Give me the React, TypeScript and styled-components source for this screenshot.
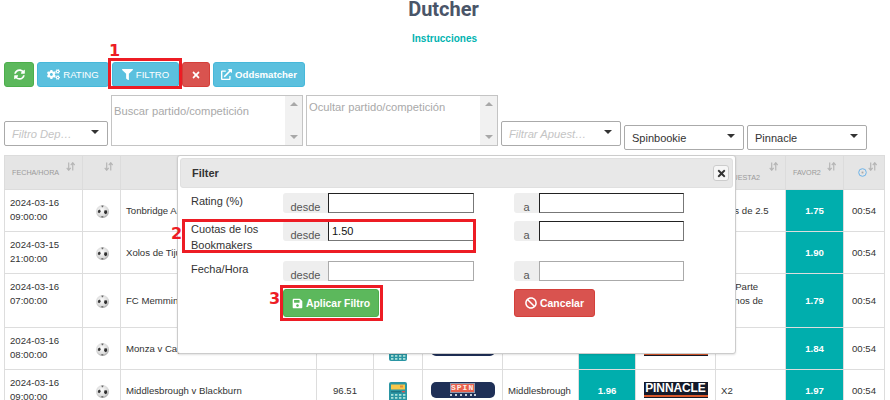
import styled, { createGlobalStyle } from "styled-components";
import {
  FaBan,
  FaCogs,
  FaExternalLinkAlt,
  FaFilter,
  FaSave,
  FaSyncAlt,
  FaTimes,
} from "react-icons/fa";

const rows = [
  { date: "2024-03-16", time: "09:00:00", event: "Tonbridge Angels v Chatham Town", rating: "98.20", home: "Tonbridge", odd: "1.73", bet: "Más de 2.5", lay: "1.75", tall: false },
  { date: "2024-03-15", time: "21:00:00", event: "Xolos de Tijuana v Puebla", rating: "97.85", home: "Xolos", odd: "1.88", bet: "", lay: "1.90", tall: false },
  { date: "2024-03-16", time: "07:00:00", event: "FC Memmingen v Augsburg II", rating: "97.10", home: "Memmingen", odd: "1.77", bet: "1.ª Parte\nMenos de\n1.5", lay: "1.79", tall: true },
  { date: "2024-03-16", time: "08:00:00", event: "Monza v Cagliari", rating: "96.80", home: "Monza", odd: "1.82", bet: "", lay: "1.84", tall: false },
  { date: "2024-03-16", time: "09:00:00", event: "Middlesbrough v Blackburn", rating: "96.51", home: "Middlesbrough", odd: "1.96", bet: "X2", lay: "1.97", tall: false },
];

const columns = [78, 38, 196, 57, 49, 80, 76, 57, 80, 70, 58, 41];

const SortIcon = () => (
  <SortMark viewBox="0 0 10 10" aria-hidden="true">
    <path d="M3 0.5V9M0.8 6.6L3 9.2L5.2 6.6M7.5 9.5V1M5.3 3.4L7.5 0.8L9.7 3.4" fill="none" stroke="#b5b5b5" strokeWidth="1.3" />
  </SortMark>
);

const Ball = () => (
  <BallSvg viewBox="0 0 13 13" aria-hidden="true">
    <defs>
      <radialGradient id="ballShade" cx="0.45" cy="0.4" r="0.65">
        <stop offset="0" stopColor="#ffffff" />
        <stop offset="0.7" stopColor="#d8d8d8" />
        <stop offset="1" stopColor="#8c8c8c" />
      </radialGradient>
    </defs>
    <circle cx="6.5" cy="6.5" r="6.5" fill="url(#ballShade)" />
    <path d="M2 5.5L4 4.6L4.8 6.8L3.2 8.2L1.8 7.2Z" fill="#3a3a3a" />
    <path d="M8.6 5.2L11 5.6L11.2 8.2L9.2 9.2L8 7.4Z" fill="#2f2f2f" />
    <path d="M5.4 0.6L7.6 0.6L7 2.2L5.8 2.2Z" fill="#6b6b6b" />
    <path d="M5.2 11L7.4 11L7.2 12.6L5.6 12.6Z" fill="#777" />
  </BallSvg>
);

const Calculator = () => (
  <CalcSvg viewBox="0 0 18 21" aria-hidden="true">
    <rect width="18" height="21" rx="2" fill="#2a95a3" />
    <rect x="2" y="2.5" width="14" height="5" fill="#f8c84a" />
    <rect x="11" y="3.5" width="3" height="2" fill="#e2893a" />
    <rect x="2" y="9" width="10" height="1.4" fill="#1e7482" />
    <rect x="13" y="9" width="3" height="1.4" fill="#d9534f" />
    {[12, 15, 18].map((y) =>
      [2, 6, 10, 14].map((x) => (
        <rect key={`${x}-${y}`} x={x} y={y} width="2.4" height="1.8" fill="#a8e0d8" />
      ))
    )}
  </CalcSvg>
);

const SpinLogo = () => (
  <SpinPill>
    <SpinWord>SPIN</SpinWord>
    <SpinDots viewBox="0 0 26 2" aria-hidden="true">
      {[1, 6, 11, 16, 21, 25].map((x) => (
        <rect key={x} x={x - 1} y="0" width="2" height="2" fill="#c8cdd8" />
      ))}
    </SpinDots>
  </SpinPill>
);

const App = () => {
  return (
    <>
      <GlobalStyle />
      <Page>
        <Title>Dutcher</Title>
        <HelpLink>Instrucciones</HelpLink>

        <Toolbar>
          <ToolButton $bg="#5cb85c" $border="#4cae4c" $width={30}>
            <FaSyncAlt size={11} />
          </ToolButton>
          <ToolButton $bg="#5bc0de" $border="#46b8da" $width={72}>
            <FaCogs size={13} /> RATING
          </ToolButton>
          <ToolButton $bg="#5bc0de" $border="#46b8da" $width={67}>
            <FaFilter size={11} /> FILTRO
          </ToolButton>
          <ToolButton $bg="#d9534f" $border="#d43f3a" $width={28}>
            <FaTimes size={10} />
          </ToolButton>
          <ToolButton $bg="#5bc0de" $border="#46b8da" $width={92} $bold>
            <FaExternalLinkAlt size={11} /> Oddsmatcher
          </ToolButton>
        </Toolbar>

        <FilterRow>
          <SelectBox $width={104} $lift={4}>
            <Placeholder>Filtro Dep…</Placeholder>
            <Caret />
          </SelectBox>
          <TextBox $width={192}>
            <TextHint $top={13}>Buscar partido/competición</TextHint>
            <ScrollTrack>
              <Arrow $up />
              <Arrow />
            </ScrollTrack>
          </TextBox>
          <TextBox $width={192}>
            <TextHint $top={9}>Ocultar partido/competición</TextHint>
            <ScrollTrack>
              <Arrow $up />
              <Arrow />
            </ScrollTrack>
          </TextBox>
          <SelectBox $width={120} $lift={4}>
            <Placeholder>Filtrar Apuest…</Placeholder>
            <Caret />
          </SelectBox>
          <SelectBox $width={120}>
            <SelectValue>Spinbookie</SelectValue>
            <Caret />
          </SelectBox>
          <SelectBox $width={120}>
            <SelectValue>Pinnacle</SelectValue>
            <Caret />
          </SelectBox>
        </FilterRow>

        <Table>
          <colgroup>
            {columns.map((width, i) => (
              <col key={i} width={width} />
            ))}
          </colgroup>
          <thead>
            <tr>
              <HeadCell>FECHA/HORA<SortIcon /></HeadCell>
              <HeadCell><SortIcon /></HeadCell>
              <HeadCell $center>EVENTO<SortIcon /></HeadCell>
              <HeadCell>RATING<SortIcon /></HeadCell>
              <HeadCell><SortIcon /></HeadCell>
              <HeadCell>CASA1<SortIcon /></HeadCell>
              <HeadCell>APUESTA1<SortIcon /></HeadCell>
              <HeadCell>FAVOR1<SortIcon /></HeadCell>
              <HeadCell>CASA2<SortIcon /></HeadCell>
              <HeadCell>2ª<br />APUESTA2<SortIcon /></HeadCell>
              <HeadCell>FAVOR2<SortIcon /></HeadCell>
              <HeadCell>
                <ClockIcon viewBox="0 0 9 9" aria-hidden="true">
                  <circle cx="4.5" cy="4.5" r="3.8" fill="none" stroke="#6db3e8" strokeWidth="1" />
                  <rect x="3.6" y="3.6" width="1.8" height="1.8" fill="#a9a9a9" />
                </ClockIcon>
                <SortIcon />
              </HeadCell>
            </tr>
          </thead>
          <tbody>
            {rows.map((row, i) => (
              <BodyRow key={i} $tall={row.tall}>
                <DateCell>
                  {row.date}
                  <br />
                  {row.time}
                </DateCell>
                <CenterCell><Ball /></CenterCell>
                <Cell>{row.event}</Cell>
                <CenterCell>{row.rating}</CenterCell>
                <CenterCell><Calculator /></CenterCell>
                <CenterCell><SpinLogo /></CenterCell>
                <Cell>{row.home}</Cell>
                <OddCell>{row.odd}</OddCell>
                <CenterCell>
                  <PinnacleLogo>PINNACLE</PinnacleLogo>
                </CenterCell>
                <BetCell>{row.bet}</BetCell>
                <OddCell>{row.lay}</OddCell>
                <CenterCell>00:54</CenterCell>
              </BodyRow>
            ))}
          </tbody>
        </Table>

        <Modal>
          <ModalHeader>
            <ModalTitle>Filter</ModalTitle>
            <CloseButton>
              <FaTimes size={11} />
            </CloseButton>
          </ModalHeader>
          <ModalBody>
            <FormRow>
              <FormLabel>Rating (%)</FormLabel>
              <InputGroup $width={191}>
                <Addon $width={45}>desde</Addon>
                <RangeInput $strong readOnly value="" />
              </InputGroup>
              <InputGroup $width={170}>
                <Addon $width={25}>a</Addon>
                <RangeInput $strong readOnly value="" />
              </InputGroup>
            </FormRow>
            <FormRow>
              <FormLabel>Cuotas de los Bookmakers</FormLabel>
              <InputGroup $width={191}>
                <Addon $width={45}>desde</Addon>
                <RangeInput $strong readOnly value="1.50" />
              </InputGroup>
              <InputGroup $width={170}>
                <Addon $width={25}>a</Addon>
                <RangeInput $strong readOnly value="" />
              </InputGroup>
            </FormRow>
            <FormRow>
              <FormLabel>Fecha/Hora</FormLabel>
              <InputGroup $width={191}>
                <Addon $width={45}>desde</Addon>
                <RangeInput readOnly value="" />
              </InputGroup>
              <InputGroup $width={170}>
                <Addon $width={25}>a</Addon>
                <RangeInput readOnly value="" />
              </InputGroup>
            </FormRow>
            <FormRow>
              <span />
              <ActionButton $bg="#5cb85c" $border="#4cae4c" $width={96}>
                <FaSave size={11} /> Aplicar Filtro
              </ActionButton>
              <ActionButton $bg="#d9534f" $border="#d43f3a" $width={81}>
                <FaBan size={12} /> Cancelar
              </ActionButton>
            </FormRow>
          </ModalBody>
        </Modal>

        <Marker $left={108} $top={58} $width={74} $height={31} />
        <Marker $left={182} $top={219} $width={294} $height={34} />
        <Marker $left={280} $top={285} $width={103} $height={36} />
        <StepNumber $left={109} $top={41}>1</StepNumber>
        <StepNumber $left={171} $top={224}>2</StepNumber>
        <StepNumber $left={269} $top={289}>3</StepNumber>
      </Page>
    </>
  );
};

export default App;

const GlobalStyle = createGlobalStyle`
  html, body {
    margin: 0;
    height: 400px;
    overflow: hidden;
    background: #fff;
  }
  * {
    box-sizing: border-box;
  }
`;

const Page = styled.div`
  color: #333;
  font-family: "Liberation Sans", Arial, sans-serif;
  font-size: 9.6px;
  height: 400px;
  overflow: hidden;
  padding: 0 4px;
  position: relative;
  width: 890px;
`;

const Title = styled.h1`
  color: #4a5568;
  font-family: Roboto, "Liberation Sans", sans-serif;
  font-size: 20px;
  font-weight: 700;
  line-height: 19px;
  margin: 0;
  padding-right: 3px;
  text-align: center;
`;

const HelpLink = styled.div`
  color: #00b3b0;
  font-size: 10px;
  font-weight: 700;
  line-height: 12px;
  margin-top: 14px;
  padding-right: 1px;
  text-align: center;
`;

const Toolbar = styled.div`
  display: flex;
  gap: 3px;
  height: 25px;
  margin-top: 17px;
`;

const ToolButton = styled.div<{ $bg: string; $border: string; $width: number; $bold?: boolean }>`
  align-items: center;
  background: ${({ $bg }) => $bg};
  border: 1px solid ${({ $border }) => $border};
  border-radius: 3px;
  color: #fff;
  display: flex;
  font-size: 9.6px;
  font-weight: ${({ $bold }) => ($bold ? 700 : 400)};
  gap: 3px;
  justify-content: center;
  width: ${({ $width }) => $width}px;
`;

const FilterRow = styled.div`
  align-items: flex-end;
  display: flex;
  gap: 3px;
  height: 55px;
  margin-top: 8px;
`;

const SelectBox = styled.div<{ $width: number; $lift?: number }>`
  align-items: center;
  background: #fff;
  border: 1px solid #aaa;
  border-radius: 2px;
  display: flex;
  height: 25px;
  justify-content: space-between;
  margin-bottom: ${({ $lift }) => $lift ?? 0}px;
  padding: 0 8px 0 7px;
  width: ${({ $width }) => $width}px;
`;

const Placeholder = styled.span`
  color: #c4c4c4;
  font-size: 11.2px;
  font-style: italic;
`;

const SelectValue = styled.span`
  color: #333;
  font-size: 11px;
`;

const Caret = styled.span`
  border-left: 4px solid transparent;
  border-right: 4px solid transparent;
  border-top: 4px solid #333;
  margin-top: -3px;
`;

const TextBox = styled.div<{ $width: number }>`
  border: 1px solid #c4c4c4;
  display: flex;
  height: 51px;
  justify-content: space-between;
  margin-bottom: 4px;
  width: ${({ $width }) => $width}px;
`;

const TextHint = styled.span<{ $top: number }>`
  color: #a9a9a9;
  font-size: 11.2px;
  padding: ${({ $top }) => $top - 4}px 0 0 2px;
`;

const ScrollTrack = styled.div`
  align-items: center;
  background: #f1f1f1;
  display: flex;
  flex-direction: column;
  justify-content: space-between;
  padding: 6px 0;
  width: 17px;
`;

const Arrow = styled.span<{ $up?: boolean }>`
  border-left: 4px solid transparent;
  border-right: 4px solid transparent;
  ${({ $up }) =>
    $up ? "border-bottom: 4px solid #a8a8a8;" : "border-top: 4px solid #a8a8a8;"}
`;

const Table = styled.table`
  border-collapse: collapse;
  margin-top: 5px;
  table-layout: fixed;
  width: 880px;
`;

const HeadCell = styled.th<{ $center?: boolean }>`
  background: #e5e5e5;
  border: 1px solid #dcdcdc;
  color: #9a9a9a;
  font-size: 7.2px;
  font-weight: 400;
  height: 34px;
  line-height: 10px;
  padding: 0 5px 0 7px;
  position: relative;
  text-align: ${({ $center }) => ($center ? "center" : "left")};
  vertical-align: middle;
`;

const SortMark = styled.svg`
  height: 9px;
  position: absolute;
  right: 7px;
  top: 6px;
  width: 9px;
`;

const ClockIcon = styled.svg`
  display: block;
  height: 9px;
  margin-left: 7px;
  width: 9px;
`;

const BodyRow = styled.tr<{ $tall: boolean }>`
  height: ${({ $tall }) => ($tall ? 54 : 42)}px;
`;

const Cell = styled.td`
  border: 1px solid #ddd;
  line-height: 13.6px;
  padding: 6px 5px;
  vertical-align: middle;
`;

const BetCell = styled(Cell)`
  white-space: pre-line;
`;

const DateCell = styled(Cell)`
  vertical-align: top;
`;

const CenterCell = styled(Cell)`
  padding-left: 2px;
  padding-right: 2px;
  text-align: center;
`;

const OddCell = styled(CenterCell)`
  background: #00aead;
  color: #fff;
  font-weight: 700;
`;

const BallSvg = styled.svg`
  display: block;
  height: 13px;
  margin: 2px 0 0 11px;
  width: 13px;
`;

const CalcSvg = styled.svg`
  display: block;
  height: 21px;
  margin: 4px auto 0;
  width: 18px;
`;

const SpinPill = styled.div`
  align-items: center;
  background: #1f3057;
  border-radius: 5px;
  display: flex;
  flex-direction: column;
  height: 16px;
  justify-content: flex-start;
  margin: -1px auto 1px;
  padding-top: 1px;
  width: 64px;
`;

const SpinWord = styled.span`
  background: #e8604c;
  border: 1px solid #8d97ad;
  color: #fbeee8;
  font-family: "Liberation Mono", monospace;
  font-size: 8px;
  font-weight: 700;
  height: 10px;
  letter-spacing: 1px;
  line-height: 8px;
  text-align: center;
  width: 25px;
`;

const SpinDots = styled.svg`
  display: block;
  height: 2px;
  margin-top: 1px;
  width: 26px;
`;

const PinnacleLogo = styled.div`
  background: #141a2a;
  border-bottom: 1px solid #141a2a;
  box-shadow: inset 0 -2px 0 #d9582b;
  color: #fff;
  font-size: 12px;
  font-weight: 700;
  height: 16px;
  letter-spacing: -0.1px;
  line-height: 12px;
  margin: -1px auto 1px;
  text-align: center;
  width: 64px;
`;

const Modal = styled.div`
  background: #fff;
  border: 1px solid #ccc;
  border-radius: 3px;
  box-shadow: 0 1px 2px rgba(0, 0, 0, 0.12);
  height: 199px;
  left: 177px;
  padding: 2px;
  position: absolute;
  top: 155px;
  width: 559px;
`;

const ModalHeader = styled.div`
  align-items: center;
  background: #e8e8e8;
  border: 1px solid #e0e0e0;
  border-radius: 3px;
  display: flex;
  height: 30px;
  justify-content: space-between;
  padding: 0 3px 0 11px;
`;

const ModalTitle = styled.span`
  color: #333;
  font-size: 11px;
  font-weight: 700;
`;

const CloseButton = styled.div`
  align-items: center;
  background: #f6f6f6;
  border: 1px solid #ccc;
  border-radius: 3px;
  color: #333;
  display: flex;
  height: 16px;
  justify-content: center;
  width: 16px;
`;

const ModalBody = styled.div`
  padding: 5px 0 0 11px;
`;

const FormRow = styled.div`
  align-items: start;
  display: grid;
  grid-template-columns: 92px 231px 170px;
  padding-bottom: 8px;
`;

const FormLabel = styled.label`
  color: #333;
  font-size: 11px;
  line-height: 16px;
`;

const InputGroup = styled.div<{ $width: number }>`
  display: flex;
  height: 20px;
  width: ${({ $width }) => $width}px;
`;

const Addon = styled.span<{ $width: number }>`
  background: #eee;
  border-radius: 3px 0 0 3px;
  color: #555;
  font-size: 11px;
  line-height: 12px;
  padding-top: 8px;
  text-align: center;
  width: ${({ $width }) => $width}px;
`;

const RangeInput = styled.input<{ $strong?: boolean }>`
  background: #fff;
  border: 1px solid #aaa;
  ${({ $strong }) => $strong && "border-color: #222 #777 #777 #222;"}
  border-radius: 0;
  color: #111;
  flex: 1;
  font-family: "Liberation Sans", Arial, sans-serif;
  font-size: 11px;
  min-width: 0;
  outline: none;
  padding: 0 3px;
`;

const ActionButton = styled.div<{ $bg: string; $border: string; $width: number }>`
  align-items: center;
  background: ${({ $bg }) => $bg};
  border: 1px solid ${({ $border }) => $border};
  border-radius: 3px;
  color: #fff;
  display: flex;
  font-size: 10.4px;
  font-weight: 700;
  gap: 3px;
  height: 28px;
  justify-content: center;
  width: ${({ $width }) => $width}px;
`;

const Marker = styled.div<{ $left: number; $top: number; $width: number; $height: number }>`
  border: 3px solid #ed1c24;
  height: ${({ $height }) => $height}px;
  left: ${({ $left }) => $left}px;
  pointer-events: none;
  position: absolute;
  top: ${({ $top }) => $top}px;
  width: ${({ $width }) => $width}px;
`;

const StepNumber = styled.span<{ $left: number; $top: number }>`
  color: #ed1c24;
  font-family: "DejaVu Sans", sans-serif;
  font-size: 16px;
  font-weight: 700;
  left: ${({ $left }) => $left}px;
  line-height: 20px;
  position: absolute;
  top: ${({ $top }) => $top}px;
`;
